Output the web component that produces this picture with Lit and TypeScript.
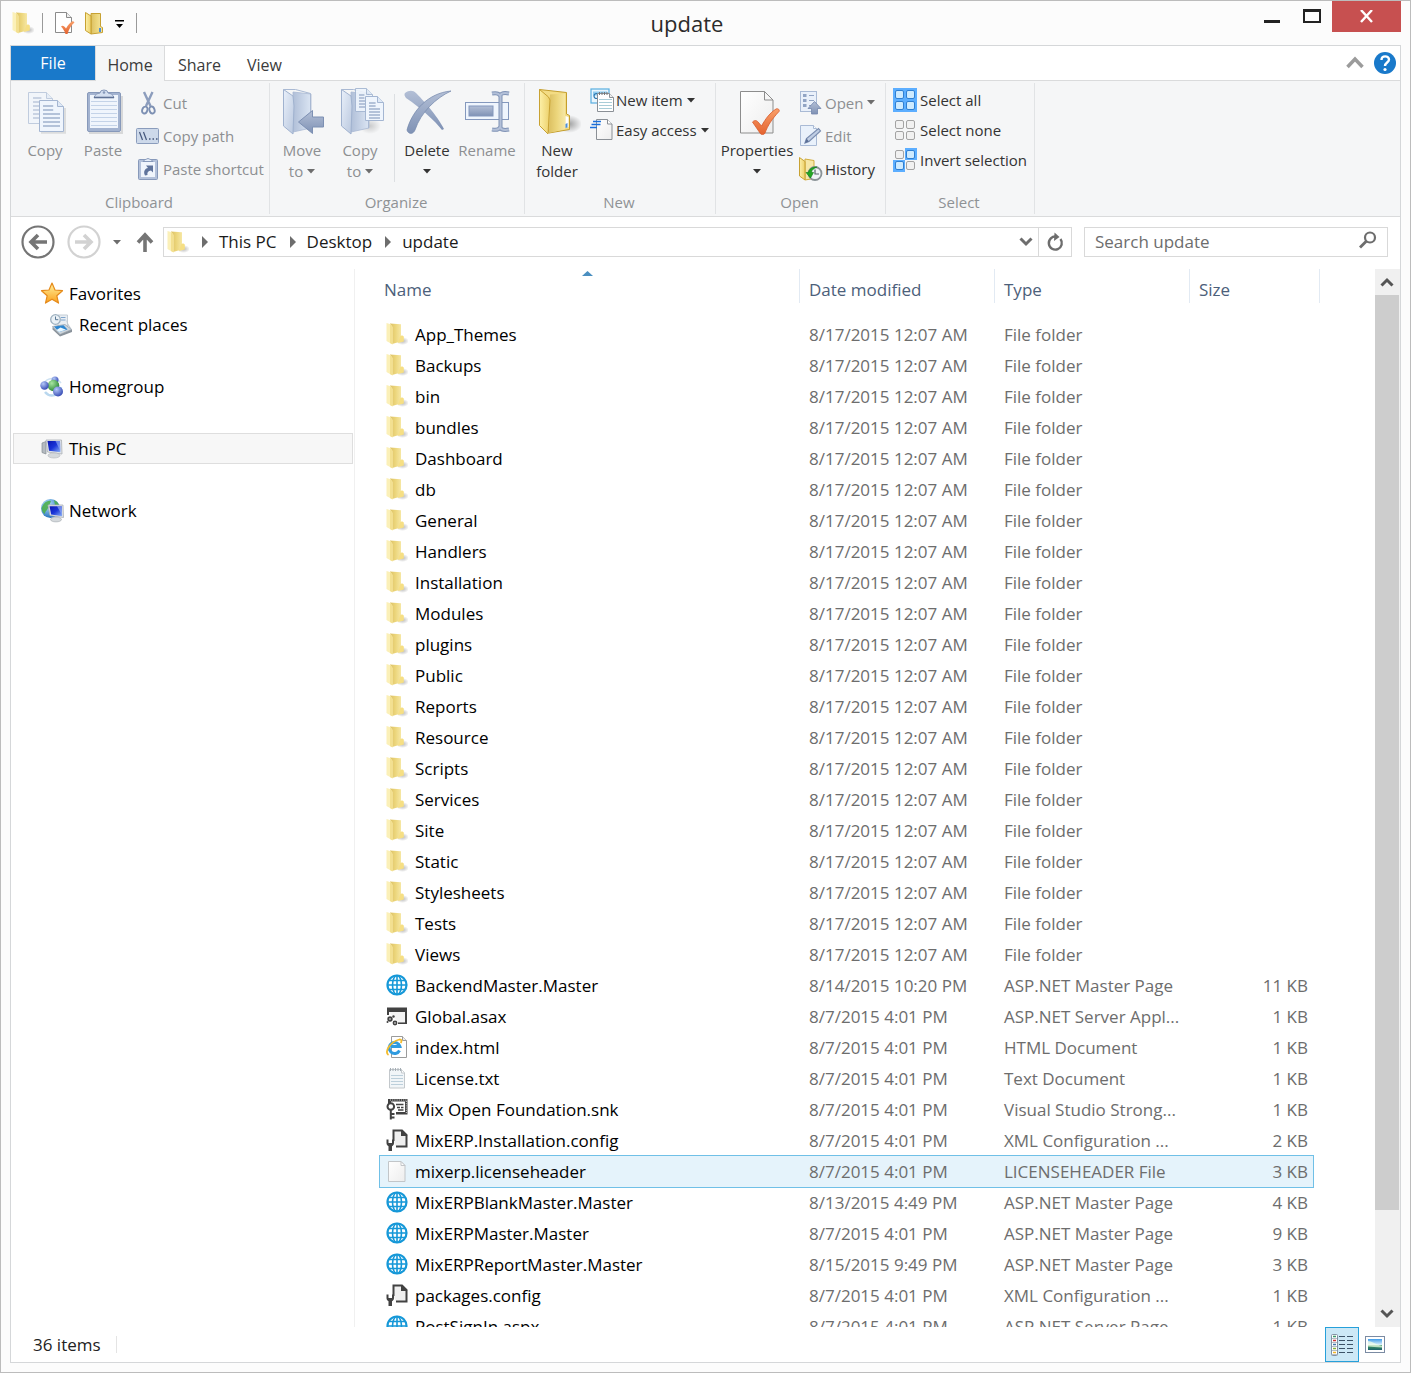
import { LitElement, html, svg, css, nothing, TemplateResult } from "lit";
import { customElement, state } from "lit/decorators.js";
import { classMap } from "lit/directives/class-map.js";

type Art = ReturnType<typeof svg>;

const pic = (w: number, h: number, art: Art): TemplateResult =>
  html`<svg class="pic" width=${w} height=${h} viewBox="0 0 ${w} ${h}" aria-hidden="true">${art}</svg>`;

/* Gradients shared by the icons. */
const gradients = html`<svg class="defs" width="0" height="0" aria-hidden="true">
  <defs>
    <linearGradient id="gold" x1="0" y1="0" x2="1" y2="0"><stop offset="0" stop-color="#fdf0a8" /><stop offset="1" stop-color="#ecd06a" /></linearGradient>
    <linearGradient id="goldDark" x1="0" y1="0" x2="1" y2="0"><stop offset="0" stop-color="#c9a93c" /><stop offset="0.5" stop-color="#e8cc66" /><stop offset="1" stop-color="#f3dd86" /></linearGradient>
    <linearGradient id="goldSoft" x1="0" y1="0" x2="1" y2="0"><stop offset="0" stop-color="#dcc062" /><stop offset="0.5" stop-color="#ecd67c" /><stop offset="1" stop-color="#f6e7a4" /></linearGradient>
    <linearGradient id="mist" x1="0" y1="0" x2="1" y2="1"><stop offset="0" stop-color="#e9f0fa" /><stop offset="1" stop-color="#b9c7de" /></linearGradient>
    <linearGradient id="mistDark" x1="0" y1="0" x2="1" y2="0"><stop offset="0" stop-color="#b0bfd8" /><stop offset="1" stop-color="#dbe5f3" /></linearGradient>
    <linearGradient id="steel" x1="0" y1="0" x2="0" y2="1"><stop offset="0" stop-color="#b3bfd6" /><stop offset="1" stop-color="#7f92b5" /></linearGradient>
    <linearGradient id="sheet" x1="0" y1="0" x2="1" y2="1"><stop offset="0" stop-color="#ffffff" /><stop offset="1" stop-color="#ededed" /></linearGradient>
    <linearGradient id="tick" x1="0" y1="0" x2="0" y2="1"><stop offset="0" stop-color="#f9a06a" /><stop offset="1" stop-color="#e4632f" /></linearGradient>
    <linearGradient id="screen" x1="0" y1="0" x2="1" y2="1"><stop offset="0" stop-color="#0a16b0" /><stop offset="0.5" stop-color="#1a35d8" /><stop offset="1" stop-color="#8fb4f4" /></linearGradient>
    <linearGradient id="starFill" x1="0" y1="0" x2="0" y2="1"><stop offset="0" stop-color="#fff3a0" /><stop offset="1" stop-color="#fba01c" /></linearGradient>
    <radialGradient id="ballBlue" cx="0.35" cy="0.3" r="0.8"><stop offset="0" stop-color="#b4c8f8" /><stop offset="1" stop-color="#2a3fae" /></radialGradient>
    <radialGradient id="ballGreen" cx="0.35" cy="0.3" r="0.8"><stop offset="0" stop-color="#a8e6a0" /><stop offset="1" stop-color="#1c7d2c" /></radialGradient>
    <radialGradient id="globe" cx="0.35" cy="0.3" r="0.8"><stop offset="0" stop-color="#b8e4ff" /><stop offset="1" stop-color="#1463b4" /></radialGradient>
    <radialGradient id="shade"><stop offset="0" stop-color="#000" stop-opacity="0.35" /><stop offset="1" stop-color="#000" stop-opacity="0" /></radialGradient>
    <linearGradient id="sky" x1="0" y1="0" x2="0" y2="1"><stop offset="0" stop-color="#3f9be8" /><stop offset="0.55" stop-color="#e6f6ff" /><stop offset="0.6" stop-color="#3f9a62" /><stop offset="1" stop-color="#1d5f6c" /></linearGradient>
  </defs>
</svg>`;

/* File-list and navigation icons. */
const folderArt = svg`
  <ellipse cx="16.500" cy="19" rx="6.500" ry="4" fill="url(#shade)" opacity="0.800" />
  <path d="M4 1.500L15 2.200V19.500L6 22z" fill="url(#goldSoft)" />
  <path d="M14 14.500l2-1.200 1.800 1.200v5L12 21z" fill="#f6df84" />
  <path d="M0.500 1l4.200 1.200L6.500 5v17.500L0.500 19z" fill="#fbf0b8" /><path d="M4 2l2.500 3v17.500L4 21z" fill="#f3e090" />`;
const folder = pic(22, 24, folderArt);

const web = pic(22, 24, svg`<g fill="none" stroke="#1698d8">
  <circle cx="11" cy="12" r="9.500" stroke-width="2.200" /><ellipse cx="11" cy="12" rx="4.500" ry="9.500" stroke-width="1.600" />
  <path d="M11 2.500v19M1.500 12h19M3 7.500h16M3 16.500h16" stroke-width="1.600" /></g>`);

const asax = pic(22, 24, svg`<path d="M1 3.500h20v16.500H12v-1.800h7V8H3v3H1z" fill="#424242" /><path d="M3 8H19v10.200H12z" fill="#f4f4f4" />
  <g fill="#424242"><circle cx="4" cy="15" r="2.700" /><circle cx="9" cy="19" r="2.400" /><circle cx="7.500" cy="12.500" r="1.200" /><circle cx="1.500" cy="18" r="1" /></g>
  <circle cx="4" cy="15" r="0.800" fill="#fff" /><circle cx="9" cy="19" r="0.800" fill="#fff" />`);

const htmlDoc = pic(22, 24, svg`<path d="M5.500 1.500h11l4 4v17h-15z" fill="#fff" stroke="#9b9b9b" /><path d="M16.500 1.500v4h4" fill="#eee" stroke="#9b9b9b" />
  <path d="M13.500 15.500a5.500 5.500 0 1 1 .4-4H5" fill="none" stroke="#2f9be0" stroke-width="3" />
  <path d="M2.500 20C-2 17.500 3.500 7 13.500 4.500c2.500-.4 2.200 2 1.200 3.600" fill="none" stroke="#f3bb2c" stroke-width="1.800" />`);

const textDoc = pic(22, 24, svg`<path d="M3.500 3.500h12l3 3v15.500h-15z" fill="#f1f5f8" stroke="#c3c8cc" />
  <path d="M5 9.500h12M5 12.500h12M5 15.500h12M5 18.500h12" stroke="#bccfdb" />
  <path d="M4.500 2v3M7 2v3M9.500 2v3M12 2v3M14.500 2v3" stroke="#a4adb4" /><path d="M15.500 3.500V7h3" fill="#fff" stroke="#c3c8cc" />`);

const keyDoc = pic(22, 24, svg`<path d="M2 2h19.500v15.500H10V15h9V4.500H5V7H2z" fill="#424242" />
  <path d="M4 3h16.500M20.300 4v12" stroke="#fff" stroke-width="0.800" stroke-dasharray="1 1.200" />
  <path d="M10 7.500h7.500M11 10.500h3M15 10.500h2.500M12 13h5.500" stroke="#424242" stroke-width="1.300" />
  <circle cx="4.800" cy="9.500" r="3.300" fill="#fff" stroke="#424242" stroke-width="2" /><path d="M4.800 13v9.500M5 17h3.500M5 20.500h3.500" stroke="#424242" stroke-width="2" fill="none" />`);

const config = pic(22, 24, svg`<path d="M7.500 13V2.500H16l4.500 4.500v11.500H10" fill="#efefef" stroke="#424242" stroke-width="2" /><path d="M15 2v6h6.500z" fill="#424242" />
  <path d="M0.500 11.500v3.500c0 1.800 1 2.600 2 3.200V23h3.500V18.200c1-.6 2-1.400 2-3.200v-3.500H6v3.500H2.500v-3.500z" fill="#424242" />`);

const blank = pic(22, 24, svg`<path d="M2.500 2.500h12.500l4 4v16H2.500z" fill="url(#sheet)" stroke="#c2c6c9" /><path d="M15 2.500v4h4z" fill="#fff" stroke="#c2c6c9" />`);

const star = pic(24, 24, svg`<path d="M12 1l3 7 7.500.7-5.700 5 1.700 7.400L12 17.200l-6.500 3.900 1.700-7.400-5.700-5 7.500-.7z" fill="url(#starFill)" stroke="#e58a1a" stroke-width="1.200" stroke-linejoin="round" />`);

const recent = pic(24, 24, svg`<path d="M9 2h9.500v13H9z" fill="#e9eef3" stroke="#c3ccd5" /><path d="M12 4.500h4.500M12 7h4.500" stroke="#7ea4cc" />
  <circle cx="6.500" cy="6.500" r="4.800" fill="#eaf1f6" stroke="#9db0bf" stroke-width="1.300" /><path d="M6.500 3.500v3.200h2.800" stroke="#5a7894" fill="none" />
  <path d="M16.500 6l3.500 6 3 4.500-3-1.500z" fill="#c2cad1" /><path d="M3.500 13.500l12.500-2 6.500 5-11.500 5z" fill="#cdd5dc" stroke="#9ba6b0" stroke-width="0.800" />
  <path d="M5 13.500l9.500-1.300 4 4.300-8.500 2.500z" fill="#2d86d0" /><path d="M7.500 17l4-2.500 5.500 2.200-7 2.300z" fill="#e9f7ff" /><path d="M3.500 14l7.500 7.500 12-5v2.500L11 23.500 3.500 16.500z" fill="#89929b" />`);

const homegroup = pic(24, 24, svg`<path d="M5 17c5 6 15 4 16-5" fill="none" stroke="#b9d7ee" stroke-width="2.500" /><path d="M4 8c3-5 12-7 17 0" fill="none" stroke="#cfe2f2" stroke-width="1.500" />
  <circle cx="15" cy="5" r="3.500" fill="url(#ballBlue)" /><circle cx="13.500" cy="10.500" r="5.800" fill="url(#ballGreen)" /><circle cx="4.500" cy="10.500" r="4.200" fill="url(#ballBlue)" /><circle cx="18" cy="16.500" r="5" fill="url(#ballBlue)" />`);

const computer = pic(24, 24, svg`<path d="M2 6l4-1.500V17l-4-1.500z" fill="#b4bac0" stroke="#858c92" stroke-width="0.700" /><path d="M6 3H21.500l.5 14-14.500-2z" fill="#e3e6e9" stroke="#a9afb5" stroke-width="0.800" />
  <path d="M7.500 4H20l.4 11.300L9 13.700z" fill="url(#screen)" /><path d="M15.500 4H20l.4 10z" fill="#8fa9f2" opacity="0.700" /><ellipse cx="14" cy="18.500" rx="6" ry="2.500" fill="#d5d9dc" stroke="#b1b6ba" stroke-width="0.600" />`);

const network = pic(24, 24, svg`<circle cx="10.500" cy="9.500" r="9.500" fill="url(#globe)" /><path d="M2 8c2-5 6-7 9-6-1 3-2 4-3 7s-3 3-3 6c-2-1-4-4-3-7zM14 1c3 1 4 3 5 5h-4z" fill="#4cae4f" opacity="0.900" />
  <path d="M8 6h15l.5 12.500-13.500-2z" fill="#e3e6e9" stroke="#a9afb5" stroke-width="0.800" /><path d="M9.500 7.200h12.300l.3 10-11-1.800z" fill="url(#screen)" /><path d="M17 7.200h4.800l.3 9z" fill="#8fa9f2" opacity="0.700" /><ellipse cx="16" cy="20.500" rx="5.500" ry="2.400" fill="#d5d9dc" stroke="#a5abb0" stroke-width="0.600" />`);

/* Ribbon icons, 48px. */
const grayPage = (x: number, y: number, w: number, h: number) => svg`
  <path d="M${x} ${y}h${w - 6}l6 6v${h - 6}h-${w}z" fill="#eff5fd" stroke="#a4b6d2" /><path d="M${x + w - 6} ${y}v6h6" fill="#dfe9f6" stroke="#a4b6d2" />`;
const pageLines = (x: number, y: number, w: number, n: number, step: number) =>
  Array.from({ length: n }, (_, i) => svg`<path d="M${x} ${y + i * step}h${i < 2 ? w * 0.6 : w}" stroke="#8a9fc2" stroke-width="1.200" />`);

const bigCopy = pic(48, 48, svg`<g opacity="0.650">${grayPage(7.5, 4.5, 24, 31)}${pageLines(12, 10, 14, 6, 4)}</g>
  <path d="M20 44.800h24V20" fill="none" stroke="#000" stroke-opacity="0.100" stroke-width="2" />${grayPage(18.5, 12.5, 24, 31)}${pageLines(22, 18, 17, 6, 4)}`);

const bigPaste = pic(48, 48, svg`<path d="M10 45h33V8" fill="none" stroke="#000" stroke-opacity="0.120" stroke-width="2" />
  <rect x="8.500" y="4.500" width="33" height="39" rx="1.500" fill="#a3b3d0" stroke="#8799ba" /><path d="M11 7h28v33H11z" fill="#f0f5fc" />
  ${Array.from({ length: 7 }, (_, i) => svg`<path d="M12 ${13.5 + i * 4}h26" stroke="#c4d3e8" />`)}
  <path d="M15 9.500c1-3 3-4 6-4.500a4 3 0 0 1 8 0c3 .5 5 1.500 6 4.500z" fill="#d4dff0" stroke="#8799ba" /><path d="M15 9.500h20" stroke="#5f7296" stroke-width="1.600" /><circle cx="25" cy="4.500" r="1.300" fill="#8799ba" />`);

const mistFolder = svg`<path d="M15 4l18 2v34l-18 4z" fill="url(#mistDark)" stroke="#a9b9d3" stroke-width="0.800" />
  <path d="M5.500 1.500L15 8l1 10-1 28L5.500 38z" fill="url(#mist)" stroke="#a0b2cf" stroke-linejoin="round" /><path d="M5.500 1.500h12L32.500 5.500V40" fill="none" stroke="#a9b9d3" />`;
const bigMove = pic(48, 48, svg`${mistFolder}<path d="M20.500 34L34.500 22.500v6.500h11v10h-11v6.500z" fill="url(#steel)" stroke="#7d90b3" stroke-linejoin="round" />`);
const bigCopyTo = pic(48, 48, svg`<ellipse cx="34" cy="38" rx="11" ry="8" fill="url(#shade)" opacity="0.500" />${mistFolder}
  <g opacity="0.900">${grayPage(19.5, 0.5, 17, 23)}${pageLines(23, 7, 9, 5, 3)}</g>${grayPage(29.5, 8.5, 18, 24)}${pageLines(33, 15, 11, 6, 3)}`);
const bigDelete = pic(48, 48, svg`<path d="M2 5c4-3 8-3 11 0 6 6 21 22 28 36l-2 1C31 32 19 21 3 10 1.500 8 1 6 2 5z" fill="url(#steel)" />
  <path d="M48 3C33 10 18 24 12 42c-2 5-7 4-8 0C9 23 25 5 48 3z" fill="url(#steel)" stroke="#7286ab" stroke-width="0.700" />`);
const bigRename = pic(48, 48, svg`<rect x="2.500" y="14.500" width="43" height="17" fill="#eff5fd" stroke="#8498bd" /><rect x="6" y="18" width="24" height="10" fill="url(#steel)" stroke="#8498bd" />
  <path d="M29 5.500c5-1 7 0 8 2 1-2 4-3 9-2M29 41.500c5 1 7 0 8-2 1 2 4 3 9 2M37.500 7v33" fill="none" stroke="#7f92b5" stroke-width="4" /><path d="M29 5.500c5-1 7 0 8 2 1-2 4-3 9-2M29 41.500c5 1 7 0 8-2 1 2 4 3 9 2M37.500 7v33" fill="none" stroke="#b3c0d8" stroke-width="2" />`);
const bigFolder = pic(48, 48, svg`<ellipse cx="36" cy="36" rx="13" ry="9" fill="url(#shade)" />
  <path d="M6.500 1.500L33.500 4.500V26l3 1.500v14L16 45z" fill="#f3dc84" stroke="#c49e2d" /><path d="M17 6.500l15-1V41l-16 4z" fill="url(#goldSoft)" />
  <path d="M6.500 1.500l9 7.500 1.500 3-2 34-8.500-8.500z" fill="url(#gold)" stroke="#c8a233" stroke-linejoin="round" /><path d="M32.500 28l3 1v10l-3 1z" fill="#fff" /><path d="M32.500 36l2-1v4.500l-2 .5z" fill="#4d8fd6" />`);
const bigProps = pic(48, 48, svg`<path d="M7.500 3.500h24l8.500 8.500v33H7.500z" fill="url(#sheet)" stroke="#8d8d8d" /><path d="M31.500 3.500V12H40z" fill="#f6f6f6" stroke="#8d8d8d" />
  <path d="M19.500 34c2-2 4-2 5.500 0l3.500 4C33 30 37 25 43 21c2-1 4 1 3 2.500C39 31 35 37 32 45c-1 2-4 2-5 0z" fill="url(#tick)" stroke="#d8592a" stroke-width="0.800" />`);

/* Ribbon icons, 24px. */
const cut = pic(24, 24, svg`<path d="M8 1l6.500 14M16.500 1L10 15" stroke="#8c9dbd" stroke-width="2.400" fill="none" /><ellipse cx="8.800" cy="19" rx="2.500" ry="3.500" transform="rotate(20 8.800 19)" fill="none" stroke="#7d90b3" stroke-width="1.900" /><ellipse cx="16" cy="19" rx="2.500" ry="3.500" transform="rotate(-20 16 19)" fill="none" stroke="#7d90b3" stroke-width="1.900" />`);
const copyPath = pic(24, 24, svg`<rect x="0.500" y="4.500" width="22" height="15" rx="1" fill="#cdd9ea" stroke="#8a9cbc" /><path d="M3.500 8l3 8M7.500 8l3 8" stroke="#43557a" stroke-width="1.200" /><path d="M13 15h1.500M16.500 15h1.500M20 15h1.500" stroke="#43557a" stroke-width="1.500" />`);
const pasteShortcut = pic(24, 24, svg`<rect x="2.500" y="2.500" width="19" height="20" rx="1" fill="#b3c1da" stroke="#8799ba" /><path d="M5 5h14v15H5z" fill="#f0f5fc" /><path d="M7 4.500c1-2 3-2 5-3 2 1 4 1 5 3z" fill="#e5edf8" stroke="#8799ba" /><path d="M9 18.500c-2-4 0-7 3-7.500L10 8.500h7V15.500l-2-2c-3 .5-4 2-3.500 4.500z" fill="#60749c" />`);
const newItem = pic(24, 26, svg`<rect x="1" y="2" width="18" height="14" fill="#eaf6fd" stroke="#58aedf" stroke-width="1.200" /><path d="M3 4.500h14v4H3z" fill="#8fcdf0" /><circle cx="6.500" cy="9" r="2.500" fill="none" stroke="#2c77ad" stroke-width="1.200" />
  <path d="M7.500 6.500h12l4 4v14h-16z" fill="#fff" stroke="#8b9096" /><path d="M9 12.500h13M9 15.500h13M9 18.500h13M9 21.500h13" stroke="#a9cdd8" /><path d="M9.500 5v3M12 5v3M14.500 5v3M17 5v3" stroke="#777" /><path d="M19.500 6.500v4h4" fill="#eee" stroke="#8b9096" />`);
const easyAccess = pic(24, 24, svg`<path d="M6.500 1.500h11l4.500 4.500v15.500H6.500z" fill="url(#sheet)" stroke="#8b9096" /><path d="M17.500 1.500V6H22" fill="#fff" stroke="#8b9096" /><path d="M3 3.500h8M1.500 6.500h9M0 9.500h7" stroke="#1a6fdc" stroke-width="1.300" />`);
const openIcon = pic(24, 24, svg`<rect x="1.500" y="0.500" width="16" height="20" fill="#e9f0fa" stroke="#a9bad5" /><path d="M4 3h3.500v3H4zM4 8h3.500v3H4zM4 13h3.500v3H4z" fill="#91a4c4" /><path d="M10 4.500h5M10 9.500h5M10 14.500h2" stroke="#91a4c4" /><path d="M15.500 10.500l6.500 7h-3.500v5.500h-6v-5.500H9z" fill="url(#steel)" stroke="#7387ac" stroke-width="0.800" />`);
const edit = pic(24, 24, svg`<path d="M1.500 1.500h13l3 3v17h-16z" fill="#e9f1fb" stroke="#a9bad5" /><path d="M14.500 1.500v3h3" fill="#fff" stroke="#a9bad5" /><path d="M6 19l1.500-4.500L19.500 4.500l2 2.500L10 17.500z" fill="#c0cee4" stroke="#7a8db0" stroke-width="1.200" /><path d="M6 19l1.500-4.500 2.500 3z" fill="#5b6f96" />`);
const historyIcon = pic(24, 24, svg`<path d="M6 2l9 1.500v18l-9 1.500z" fill="#f6e7a6" stroke="#d2ad3e" /><path d="M0.500 0.500L6 4.500V23L0.500 19z" fill="url(#gold)" stroke="#c8a233" />
  <circle cx="16" cy="16.500" r="6.500" fill="#eef3f5" stroke="#8a9296" stroke-width="1.800" /><path d="M16 12.500v4.500h4" fill="none" stroke="#58656c" stroke-width="1.200" /><path d="M18 10c-5 0-8 2-8.500 5.500H7l4.500 5.500 3-5.500h-2c0-2.500 2-4 5.500-5.500z" fill="#22a722" stroke="#0f7d12" stroke-width="0.600" />`);

const tile = (x: number, y: number, on: boolean) => svg`<rect x=${x + 2.5} y=${y + 2.5} width="8" height="8" rx="1.500" fill=${on ? "#cdeaff" : "#f1f1f1"} stroke=${on ? "#2f7fd2" : "#a3a3a3"} />`;
const tiles = (on: boolean[]) => pic(24, 24, svg`${on.map((v, i) => v ? svg`<rect x=${(i % 2) * 12} y=${Math.floor(i / 2) * 12} width="12" height="12" fill="#5caeff" />` : nothing)}
  ${on.map((v, i) => tile((i % 2) * 11, Math.floor(i / 2) * 11, v))}`);

/* Glyphs of the window frame and the bars. */
const triangle = pic(8, 5, svg`<path d="M0 0h8L4 4.500z" fill="currentColor" />`);
const crumbArrow = pic(7, 12, svg`<path d="M1 0v12l6-6z" fill="currentColor" />`);
const chevron = (dir: "up" | "down") => pic(14, 10, svg`<path d=${dir === "up" ? "M1.500 8.500L7 3l5.500 5.500" : "M1.500 1.500L7 7l5.500-5.500"} fill="none" stroke="currentColor" stroke-width="3" />`);
const qatCheck = pic(22, 24, svg`<path d="M1.500 1.500h11l5 5v15h-16z" fill="#fff" stroke="#8b8b8b" /><path d="M12.500 1.500v5h5" fill="#eee" stroke="#8b8b8b" /><path d="M7 15.500c1.500-1.500 3-1 5 2C14 14 16 11.500 19 10l1.500 1.500C17 14.500 15 18 13.500 23h-2C10.500 20 9 17.500 7 15.500z" fill="url(#tick)" />`);
const qatFolder = pic(20, 24, svg`<path d="M7 2.500h9.500v13l2 1v5L7 23z" fill="url(#goldSoft)" stroke="#c7a132" /><path d="M1.500 1.500L7 5v18l-5.500-3.500z" fill="url(#gold)" stroke="#c7a132" /><path d="M15 17h2v4h-2z" fill="#4d8fd6" />`);

interface Entry { name: string; date: string; type: string; size?: string; icon: TemplateResult; selected?: boolean }

const folderNames = ["App_Themes", "Backups", "bin", "bundles", "Dashboard", "db", "General", "Handlers", "Installation", "Modules", "plugins", "Public", "Reports", "Resource", "Scripts", "Services", "Site", "Static", "Stylesheets", "Tests", "Views"];

const entries: Entry[] = [
  ...folderNames.map((name) => ({ name, date: "8/17/2015 12:07 AM", type: "File folder", icon: folder })),
  { name: "BackendMaster.Master", date: "8/14/2015 10:20 PM", type: "ASP.NET Master Page", size: "11 KB", icon: web },
  { name: "Global.asax", date: "8/7/2015 4:01 PM", type: "ASP.NET Server Appl...", size: "1 KB", icon: asax },
  { name: "index.html", date: "8/7/2015 4:01 PM", type: "HTML Document", size: "1 KB", icon: htmlDoc },
  { name: "License.txt", date: "8/7/2015 4:01 PM", type: "Text Document", size: "1 KB", icon: textDoc },
  { name: "Mix Open Foundation.snk", date: "8/7/2015 4:01 PM", type: "Visual Studio Strong...", size: "1 KB", icon: keyDoc },
  { name: "MixERP.Installation.config", date: "8/7/2015 4:01 PM", type: "XML Configuration ...", size: "2 KB", icon: config },
  { name: "mixerp.licenseheader", date: "8/7/2015 4:01 PM", type: "LICENSEHEADER File", size: "3 KB", icon: blank, selected: true },
  { name: "MixERPBlankMaster.Master", date: "8/13/2015 4:49 PM", type: "ASP.NET Master Page", size: "4 KB", icon: web },
  { name: "MixERPMaster.Master", date: "8/7/2015 4:01 PM", type: "ASP.NET Master Page", size: "9 KB", icon: web },
  { name: "MixERPReportMaster.Master", date: "8/15/2015 9:49 PM", type: "ASP.NET Master Page", size: "3 KB", icon: web },
  { name: "packages.config", date: "8/7/2015 4:01 PM", type: "XML Configuration ...", size: "1 KB", icon: config },
  { name: "PostSignIn.aspx", date: "8/7/2015 4:01 PM", type: "ASP.NET Server Page", size: "1 KB", icon: web },
];

interface BigSpec { icon: TemplateResult; lines: string[]; off?: boolean; drop?: boolean; size?: string }
interface SmallSpec { icon: TemplateResult; text: string; off?: boolean; drop?: boolean }

@customElement("app-root")
export class AppRoot extends LitElement {
  @state() private selected = entries.findIndex((e) => e.selected);

  static styles = css`
    :host {
      display: block;
      height: 100vh;
      font-family: "Open Sans", "Noto Sans", sans-serif;
      font-size: 17px;
      line-height: 22px;
      color: #000;
    }
    * { box-sizing: border-box; }
    button {
      font: inherit;
      color: inherit;
      background: none;
      border: 0;
      padding: 0;
      margin: 0;
      cursor: default;
      white-space: nowrap;
    }
    a { color: inherit; text-decoration: none; }
    ul { list-style: none; margin: 0; padding: 0; }
    .pic { display: block; flex: none; }
    .defs { position: absolute; }

    .window {
      height: 100%;
      display: flex;
      flex-direction: column;
      background: #fcfcfc;
      border: 1px solid #bcbcbc;
      padding: 0 9px 9px;
    }
    .titlebar { display: flex; flex: none; height: 44px; }
    .quick { display: flex; align-items: center; height: 44px; flex: none; padding-left: 2px; }
    .quick .rule { width: 1px; height: 20px; background: #9a9a9a; flex: none; }
    .quick .rule.first { margin: 0 11px 0 8px; }
    .quick .space { margin-left: 8px; }
    .quick .more { margin: 0 12px 0 11px; }
    .title { flex: 1; margin: 0; text-align: center; font-size: 22px; line-height: 44px; font-weight: 400; color: #2b2b2b; }
    .controls { display: flex; height: 31px; padding-left: 15px; }
    .controls button { width: 40px; display: flex; align-items: center; justify-content: center; }
    .controls .close { width: 69px; background: #c75050; }

    .frame {
      flex: 1;
      min-height: 0;
      display: flex;
      flex-direction: column;
      background: #fff;
      border: 1px solid #d5d7d9;
    }
    .tabs { display: flex; flex: none; height: 35px; font-size: 16px; border-bottom: 1px solid #dadbdc; color: #3b3b3b; }
    .tabs button { padding: 4px 13px 0; }
    .tabs .filetab { width: 84px; padding: 0; background: #1979ca; color: #fff; height: 34px; }
    .tabs .home { background: #f5f6f7; border: 1px solid #dadbdc; border-width: 0 1px; height: 35px; width: 70px; padding: 3px 0 0; }
    .tabs .fill { flex: 1; }
    .tabs .collapse { color: #9b9b9b; padding: 0 10px 0 0; }
    .tabs .help { padding: 0 4px 0 0; }

    .ribbon { display: flex; flex: none; height: 136px; background: #f5f6f7; border-bottom: 1px solid #dadbdc; padding: 2px 0; font-size: 15px; color: #333; }
    .group { display: grid; grid-template-rows: 1fr 24px; border-right: 1px solid #e1e3e5; }
    .group .label { text-align: center; color: #8f9295; line-height: 24px; padding-right: 2px; }
    .clipboard { width: 259px; }
    .organize { width: 255px; }
    .new { width: 191px; }
    .open { width: 170px; }
    .select { width: 149px; }
    .tools { display: flex; padding: 0 3px; }
    .clipboard .tools, .select .tools { padding: 0 4px 0 5px; }
    .big { width: 58px; display: flex; flex-direction: column; align-items: center; justify-content: flex-start; padding-top: 5px; gap: 4px; line-height: 21px; }
    .big.wide { width: 76px; }
    .big.mid { width: 62px; }
    .big .second { display: flex; align-items: center; justify-content: center; gap: 4px; height: 21px; }
    .bar { width: 1px; background: #dcdfe2; margin: 11px 3px 8px 5px; }
    .off { color: #8d8f92; }
    .off .pic { color: #6d6d6d; }
    .small { display: flex; flex-direction: column; padding: 3px 0 0 4px; }
    .small button { display: flex; align-items: center; height: 33px; gap: 2px; }
    .small.tight { padding-top: 2px; }
    .small.tight button { height: 30px; }
    .small .drop { padding-left: 2px; }
    .select .small { padding-left: 2px; }
    .clipboard .small button, .select .small button { gap: 3px; }

    .address { display: flex; flex: none; align-items: center; height: 52px; padding: 0 12px 2px 10px; color: #1a1a1a; }
    .address .nav { display: flex; align-items: center; gap: 12px; padding-right: 8px; color: #6d6d6d; }
    .path { flex: 1; display: flex; height: 30px; border: 1px solid #d9d9d9; }
    .crumbs { flex: 1; display: flex; align-items: center; gap: 12px; padding-left: 3px; }
    .crumbs li { display: flex; align-items: center; gap: 11px; }
    .crumbs .pic { color: #6d6d6d; }
    .path button { color: #6d6d6d; width: 25px; display: flex; align-items: center; justify-content: center; }
    .path .reload { width: 33px; border-left: 1px solid #d9d9d9; }
    .search { display: flex; align-items: center; width: 304px; height: 30px; margin-left: 12px; padding: 0 10px; border: 1px solid #d9d9d9; color: #6d6d6d; }
    .search .pic { margin-bottom: 4px; }
    .search input { flex: 1; min-width: 0; border: 0; outline: 0; padding: 0; background: none; font: inherit; color: inherit; }
    .search input::placeholder { color: #6d6d6d; opacity: 1; }

    .main { flex: 1; min-height: 0; display: flex; }
    .tree { width: 344px; flex: none; border-right: 1px solid #f0f0f0; padding: 9px 1px 0 2px; }
    .tree ul + ul { margin-top: 31px; }
    .tree a { display: flex; align-items: center; gap: 5px; height: 31px; padding-left: 26px; border: 1px solid transparent; }
    .tree .child { padding-left: 35px; gap: 6px; }
    .tree .current { background: #f7f7f7; border-color: #dedede; }

    .list { flex: 1; min-width: 0; overflow: hidden; padding-left: 24px; }
    table { table-layout: fixed; width: 941px; border-collapse: separate; border-spacing: 0; }
    .c-name { width: 421px; }
    .c-mid { width: 195px; }
    .c-size { width: 124px; }
    .c-end { width: 6px; }
    th { font-weight: 400; color: #4c607a; text-align: left; padding: 0 0 16px; height: 50px; }
    th .head { display: flex; flex-direction: column; width: 100%; height: 34px; padding: 10px 9px 0; border-right: 1px solid #e2eaf3; }
    th:first-child .head { padding: 2px 5px 0; }
    .sorted { align-self: center; color: #4a8fc0; height: 8px; padding-right: 4px; }
    td { height: 31px; padding: 0 9px; color: #6d6d6d; white-space: nowrap; overflow: hidden; }
    td:first-child { padding: 0 7px; color: #000; }
    td.size { text-align: right; padding: 0 6px; }
    .item { display: flex; align-items: center; gap: 7px; }
    .item .pic { margin-bottom: 2px; }
    .picked td:not(.end) { background: #e5f3fb; box-shadow: 0 -1px #70c0e7, 0 1px #70c0e7; }
    .picked td:first-child { box-shadow: inset 1px 0 #70c0e7, 0 -1px #70c0e7, 0 1px #70c0e7; }
    .picked td.size { box-shadow: inset -1px 0 #70c0e7, 0 -1px #70c0e7, 0 1px #70c0e7; }

    .scroll { width: 25px; flex: none; display: flex; flex-direction: column; background: #f0f0f0; color: #555; }
    .scroll button { height: 26px; width: 24px; display: flex; align-items: center; justify-content: center; }
    .scroll .track { flex: 1; padding-right: 1px; }
    .scroll .thumb { height: 91%; background: #cdcdcd; }

    .status { display: flex; align-items: stretch; flex: none; height: 35px; padding: 0 15px 0 22px; line-height: 35px; }
    .status .count { padding-right: 15px; color: #222; }
    .status .rule { width: 1px; margin: 9px 0; background: #e4e4e4; }
    .status .fill { flex: 1; }
    .status button { display: flex; align-items: center; justify-content: center; width: 34px; }
    .status .on { background: #cce8f6; border: 1px solid #26a0da; }
    .status .thumbs { width: 26px; padding-left: 6px; }
  `;

  private big(b: BigSpec) {
    return html`<button type="button" class=${classMap({ big: true, off: !!b.off, wide: b.size === "wide", mid: b.size === "mid" })}>
      ${b.icon}
      <span>
        <span>${b.lines[0]}</span>
        <span class="second">${b.lines[1] ?? nothing}${b.drop ? triangle : nothing}</span>
      </span>
    </button>`;
  }

  private small(items: SmallSpec[], tight = false) {
    return html`<div class=${classMap({ small: true, tight })}>
      ${items.map((s) => html`<button type="button" class=${classMap({ off: !!s.off })}>
        ${s.icon}<span>${s.text}</span>${s.drop ? html`<span class="drop">${triangle}</span>` : nothing}
      </button>`)}
    </div>`;
  }

  private renderTitle() {
    return html`<header class="titlebar">
      <div class="quick">
        ${folder}
        <span class="rule first"></span>
        <button type="button" aria-label="Properties">${qatCheck}</button>
        <button type="button" class="space" aria-label="New folder">${qatFolder}</button>
        <button type="button" class="more" aria-label="Customize Quick Access Toolbar">${pic(9, 9, svg`<path d="M0 1h9v1.500H0zM1 5h7L4.500 9z" fill="#000" />`)}</button>
        <span class="rule"></span>
      </div>
      <h1 class="title">update</h1>
      <div class="controls">
        <button type="button" aria-label="Minimize">${pic(16, 16, svg`<path d="M0 11h16v3H0z" fill="#222" />`)}</button>
        <button type="button" aria-label="Maximize">${pic(18, 16, svg`<path d="M0 0h18v14H0zM2 3v9h14V3z" fill="#222" fill-rule="evenodd" />`)}</button>
        <button type="button" class="close" aria-label="Close">${pic(14, 14, svg`<path d="M1 0l11 12M12 0L1 12" stroke="#fff" stroke-width="2.400" />`)}</button>
      </div>
    </header>`;
  }

  private renderRibbon() {
    return html`
      <nav class="tabs">
        <button type="button" class="filetab">File</button>
        <button type="button" class="home">Home</button>
        <button type="button">Share</button>
        <button type="button">View</button>
        <span class="fill"></span>
        <button type="button" class="collapse" aria-label="Minimize the Ribbon">${pic(18, 14, svg`<path d="M1.500 11L9 3l7.500 8" fill="none" stroke="currentColor" stroke-width="3.500" />`)}</button>
        <button type="button" class="help" aria-label="Help">${pic(22, 22, svg`<circle cx="11" cy="11" r="11" fill="#1979ca" /><path d="M7.500 8c0-5 7.500-4.500 7.500-.500 0 3-4 3-4 6.500" fill="none" stroke="#fff" stroke-width="2.400" /><circle cx="11" cy="17.500" r="1.600" fill="#fff" />`)}</button>
      </nav>
      <section class="ribbon">
        <div class="group clipboard">
          <div class="tools">
            ${this.big({ icon: bigCopy, lines: ["Copy"], off: true })}
            ${this.big({ icon: bigPaste, lines: ["Paste"], off: true })}
            ${this.small([
              { icon: cut, text: "Cut", off: true },
              { icon: copyPath, text: "Copy path", off: true },
              { icon: pasteShortcut, text: "Paste shortcut", off: true },
            ])}
          </div>
          <span class="label">Clipboard</span>
        </div>
        <div class="group organize">
          <div class="tools">
            ${this.big({ icon: bigMove, lines: ["Move", "to"], off: true, drop: true })}
            ${this.big({ icon: bigCopyTo, lines: ["Copy", "to"], off: true, drop: true })}
            <span class="bar"></span>
            ${this.big({ icon: bigDelete, lines: ["Delete"], drop: true })}
            ${this.big({ icon: bigRename, lines: ["Rename"], off: true, size: "mid" })}
          </div>
          <span class="label">Organize</span>
        </div>
        <div class="group new">
          <div class="tools">
            ${this.big({ icon: bigFolder, lines: ["New", "folder"] })}
            ${this.small([
              { icon: newItem, text: "New item", drop: true },
              { icon: easyAccess, text: "Easy access", drop: true },
            ], true)}
          </div>
          <span class="label">New</span>
        </div>
        <div class="group open">
          <div class="tools">
            ${this.big({ icon: bigProps, lines: ["Properties"], drop: true, size: "wide" })}
            ${this.small([
              { icon: openIcon, text: "Open", off: true, drop: true },
              { icon: edit, text: "Edit", off: true },
              { icon: historyIcon, text: "History" },
            ])}
          </div>
          <span class="label">Open</span>
        </div>
        <div class="group select">
          <div class="tools">
            ${this.small([
              { icon: tiles([true, true, true, true]), text: "Select all" },
              { icon: tiles([false, false, false, false]), text: "Select none" },
              { icon: tiles([false, true, true, false]), text: "Invert selection" },
            ], true)}
          </div>
          <span class="label">Select</span>
        </div>
      </section>`;
  }

  private renderAddress() {
    const crumbs = ["This PC", "Desktop", "update"];
    return html`<section class="address">
      <div class="nav">
        <button type="button" aria-label="Back">${pic(34, 34, svg`<circle cx="17" cy="17" r="15.500" fill="none" stroke="#757575" stroke-width="2.200" /><path d="M26 17H10M17 10l-7 7 7 7" fill="none" stroke="#757575" stroke-width="3.600" />`)}</button>
        <button type="button" aria-label="Forward">${pic(34, 34, svg`<circle cx="17" cy="17" r="15.500" fill="none" stroke="#d2d2d2" stroke-width="2.200" /><path d="M8 17h16M17 10l7 7-7 7" fill="none" stroke="#d2d2d2" stroke-width="3.600" />`)}</button>
        <button type="button" aria-label="Recent locations">${triangle}</button>
        <button type="button" aria-label="Up">${pic(22, 22, svg`<path d="M12 21V5M5 11.500l7-7.500 7 7.500" fill="none" stroke="#757575" stroke-width="3.600" />`)}</button>
      </div>
      <div class="path">
        <ul class="crumbs">
          <li>${folder}</li>
          ${crumbs.map((c) => html`<li>${crumbArrow}<a href="#${c}">${c}</a></li>`)}
        </ul>
        <button type="button" aria-label="Previous locations">${chevron("down")}</button>
        <button type="button" class="reload" aria-label="Refresh">${pic(18, 20, svg`<path d="M13.500 6A6.500 6.500 0 1 1 9 4.500" fill="none" stroke="currentColor" stroke-width="2.400" transform="rotate(12 9 11)" /><path d="M8.500 0.500l5 4.500-5.500 4z" fill="currentColor" />`)}</button>
      </div>
      <label class="search">
        <input type="text" aria-label="Search update" placeholder="Search update" />
        ${pic(18, 18, svg`<circle cx="11" cy="6.500" r="5" fill="none" stroke="currentColor" stroke-width="2.200" /><path d="M7.500 10L1 16.500" stroke="currentColor" stroke-width="2.800" />`)}
      </label>
    </section>`;
  }

  private renderTree() {
    return html`<nav class="tree">
      <ul>
        <li><a href="#favorites">${star}Favorites</a></li>
        <li><a class="child" href="#recent">${recent}Recent places</a></li>
      </ul>
      <ul><li><a href="#homegroup">${homegroup}Homegroup</a></li></ul>
      <ul><li><a class="current" href="#pc">${computer}This PC</a></li></ul>
      <ul><li><a href="#network">${network}Network</a></li></ul>
    </nav>`;
  }

  private renderList() {
    return html`<div class="list">
      <table>
        <colgroup><col class="c-name" /><col class="c-mid" /><col class="c-mid" /><col class="c-size" /><col class="c-end" /></colgroup>
        <thead>
          <tr>
            <th><div class="head"><span class="sorted">${pic(11, 5, svg`<path d="M0 5L5.500 0 11 5z" fill="currentColor" />`)}</span>Name</div></th>
            <th><div class="head">Date modified</div></th>
            <th><div class="head">Type</div></th>
            <th colspan="2"><div class="head">Size</div></th>
          </tr>
        </thead>
        <tbody>
          ${entries.map((e, i) => html`<tr class=${classMap({ picked: i === this.selected })} @click=${() => (this.selected = i)}>
            <td><div class="item">${e.icon}${e.name}</div></td>
            <td>${e.date}</td>
            <td>${e.type}</td>
            <td class="size">${e.size ?? nothing}</td>
            <td class="end"></td>
          </tr>`)}
        </tbody>
      </table>
    </div>`;
  }

  render() {
    return html`${gradients}
      <div class="window">
        ${this.renderTitle()}
        <div class="frame">
          ${this.renderRibbon()} ${this.renderAddress()}
          <div class="main">
            ${this.renderTree()} ${this.renderList()}
            <div class="scroll">
              <button type="button" aria-label="Scroll up">${chevron("up")}</button>
              <div class="track"><div class="thumb"></div></div>
              <button type="button" aria-label="Scroll down">${chevron("down")}</button>
            </div>
          </div>
          <footer class="status">
            <span class="count">36 items</span><span class="rule"></span><span class="fill"></span>
            <button type="button" class="on" aria-label="Details view">${pic(22, 22, svg`<rect x="0.500" y="0.500" width="6" height="21" rx="1" fill="#fff" stroke="#8292a3" />
              ${["#3d9a6a", "#c33", "#47a", "#8ab33a", "#f0b429"].map((c, i) => svg`<path d="M2 ${2.5 + i * 4}h3" stroke=${c} stroke-width="1.500" /><path d="M1 ${4.5 + i * 4}h5" stroke="#8292a3" stroke-width="0.600" /><path d="M8 ${2.5 + i * 4}h6M16 ${2.5 + i * 4}h6" stroke="#3c5368" />`)}`)}</button>
            <button type="button" class="thumbs" aria-label="Large thumbnails">${pic(20, 17, svg`<rect x="0.500" y="0.500" width="19" height="16" fill="#fff" stroke="#7b8ba3" /><path d="M3 3h14v11H3z" fill="url(#sky)" /><path d="M3 5c3 0 7 3 14 5v1.500c-6 0-10-1-14-1z" fill="#f4ffe8" opacity="0.700" />`)}</button>
          </footer>
        </div>
      </div>`;
  }
}
